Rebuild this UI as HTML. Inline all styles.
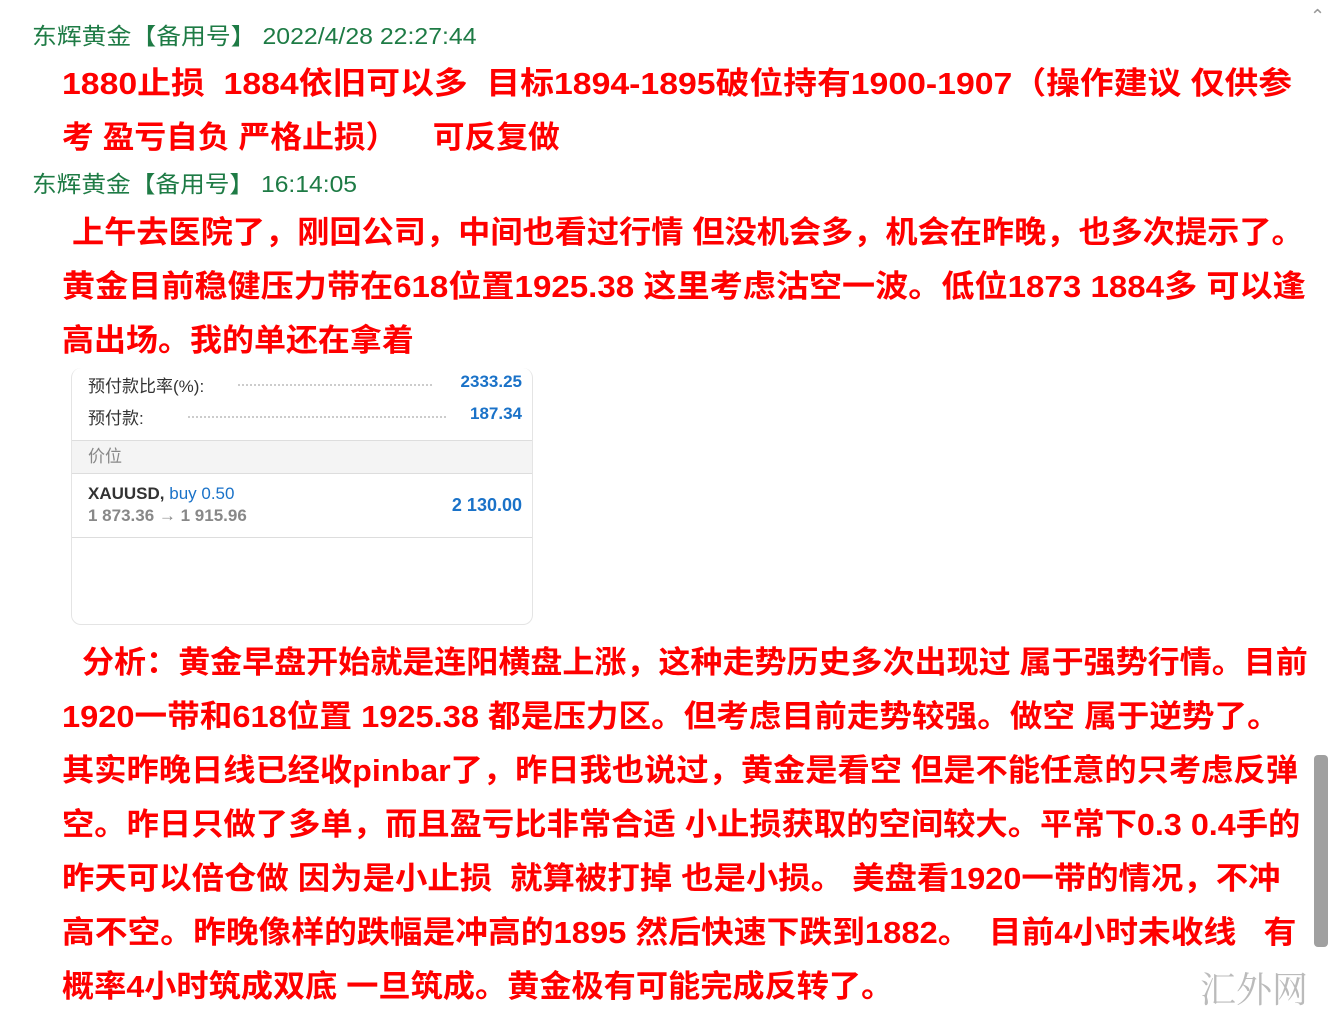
<!DOCTYPE html>
<html><head><meta charset="utf-8"><style>
body{margin:0;width:1328px;height:1012px;background:#fff;position:relative;overflow:hidden;font-family:"Liberation Sans","Noto Sans CJK SC",sans-serif}
.g{position:absolute;left:32px;color:#1e7b45;font-size:23px;white-space:nowrap;line-height:1;transform-origin:0 0}
.r{position:absolute;color:#f00;font-weight:bold;font-size:31px;white-space:pre;line-height:1;transform-origin:0 0}
.card{position:absolute;left:71px;top:368px;width:460px;height:256px;border:1px solid #e4e4e4;border-radius:10px;border-top:none;font-size:17px;color:#333}
.card .row{position:absolute;left:16px;right:10px}
.dots{position:absolute;border-top:2px dotted #ccc;height:0}
.b{color:#1a72c8;font-weight:bold;position:absolute;right:0}
</style></head><body>
<div class="g" style="top:25px;transform:scaleX(1.08)">东辉黄金【备用号】 2022/4/28 22:27:44</div>
<div class="r" style="top:68px;left:62px;transform:scaleX(1.09)">1880止损  1884依旧可以多  目标1894-1895破位持有1900-1907（操作建议 仅供参</div>
<div class="r" style="top:122px;left:62px;transform:scaleX(1.025)">考 盈亏自负 严格止损）    可反复做</div>
<div class="g" style="top:173px;transform:scaleX(1.073)">东辉黄金【备用号】  16:14:05</div>
<div class="r" style="top:217px;left:72px;transform:scaleX(1.038)">上午去医院了，刚回公司，中间也看过行情 但没机会多，机会在昨晚，也多次提示了。</div>
<div class="r" style="top:271px;left:62px;transform:scaleX(1.068)">黄金目前稳健压力带在618位置1925.38 这里考虑沽空一波。低位1873 1884多 可以逢</div>
<div class="r" style="top:325px;left:62px;transform:scaleX(1.032)">高出场。我的单还在拿着</div>
<div class="card">
 <div class="row" style="top:4px">预付款比率(%):<div class="dots" style="left:150px;right:90px;top:12px"></div><span class="b">2333.25</span></div>
 <div class="row" style="top:36px">预付款:<div class="dots" style="left:100px;right:76px;top:12px"></div><span class="b">187.34</span></div>
 <div style="position:absolute;left:0;right:0;top:72px;height:32px;background:#f4f4f4;border-top:1px solid #ddd;border-bottom:1px solid #ddd;color:#888;padding-left:16px;line-height:32px">价位</div>
 <div class="row" style="top:116px;font-weight:bold;color:#333">XAUUSD, <span style="color:#1a72c8;font-weight:normal">buy 0.50</span></div>
 <div class="row" style="top:138px;color:#888;font-weight:bold">1 873.36 → 1 915.96</div>
 <div class="row" style="top:127px"><span class="b" style="font-size:18px">2 130.00</span></div>
 <div style="position:absolute;left:0;right:0;top:169px;border-top:1px solid #ddd"></div>
</div>
<div class="r" style="top:647px;left:82px;transform:scaleX(1.033)">分析：黄金早盘开始就是连阳横盘上涨，这种走势历史多次出现过 属于强势行情。目前</div>
<div class="r" style="top:701px;left:62px;transform:scaleX(1.052)">1920一带和618位置 1925.38 都是压力区。但考虑目前走势较强。做空 属于逆势了。</div>
<div class="r" style="top:755px;left:62px;transform:scaleX(1.04)">其实昨晚日线已经收pinbar了，昨日我也说过，黄金是看空 但是不能任意的只考虑反弹</div>
<div class="r" style="top:809px;left:62px;transform:scaleX(1.042)">空。昨日只做了多单，而且盈亏比非常合适 小止损获取的空间较大。平常下0.3 0.4手的</div>
<div class="r" style="top:863px;left:62px;transform:scaleX(1.045)">昨天可以倍仓做 因为是小止损  就算被打掉 也是小损。 美盘看1920一带的情况，不冲</div>
<div class="r" style="top:917px;left:62px;transform:scaleX(1.057)">高不空。昨晚像样的跌幅是冲高的1895 然后快速下跌到1882。  目前4小时未收线   有</div>
<div class="r" style="top:971px;left:62px;transform:scaleX(1.038)">概率4小时筑成双底 一旦筑成。黄金极有可能完成反转了。</div>
<div style="position:absolute;left:1314px;top:755px;width:14px;height:192px;background:#a0a0a0;border-radius:4px"></div>
<div style="position:absolute;left:1200px;top:962px;font-size:36px;color:#bbb;font-family:'Noto Serif CJK SC',serif">汇外网</div>
<div style="position:absolute;left:1310px;top:6px;color:#999;font-size:18px">⌃</div>
</body></html>
